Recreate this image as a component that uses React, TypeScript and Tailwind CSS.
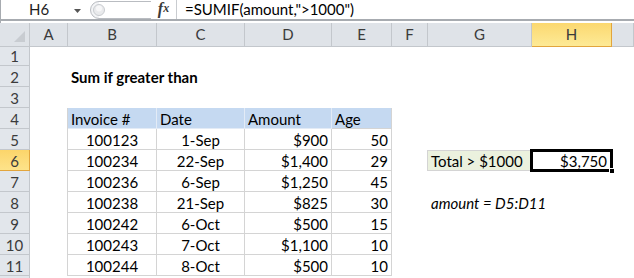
const colHeads = ['A', 'B', 'C', 'D', 'E', 'F', 'G', 'H', ''];

const invoices = [
    ['100123', '1-Sep', '$900', '50'],
    ['100234', '22-Sep', '$1,400', '29'],
    ['100236', '6-Sep', '$1,250', '45'],
    ['100238', '21-Sep', '$825', '30'],
    ['100242', '6-Oct', '$500', '15'],
    ['100243', '7-Oct', '$1,100', '10'],
    ['100244', '8-Oct', '$500', '10'],
];

const FormulaBar = () => (
    <div className="flex h-[21px] items-center border-b-2 border-l border-[#a7abb0] bg-white">
        <div className="relative flex h-full w-[86px] items-center">
            <span className="pl-[28px] text-[15px] text-[#1e1e1e]">H6</span>
            <svg className="absolute left-[73px] top-[9px]" width="8" height="5" viewBox="0 0 8 5">
                <path d="M0 0h7L3.5 4z" fill="#555" />
            </svg>
        </div>
        <svg width="64" height="20" viewBox="0 0 64 20" className="shrink-0">
            <path d="M12 1.5h52M12 18.5h52M12 1.5a8.5 8.5 0 0 0 0 17" stroke="#b9bcc1" fill="#f3f4f6" />
            <circle cx="12" cy="10" r="5.5" fill="#e9eaec" stroke="#c9ccd0" />
            <circle cx="12" cy="8.5" r="3" fill="#f7f7f8" />
        </svg>
        <div className="flex w-[25px] shrink-0 justify-center pb-[2px] font-['Liberation_Serif',serif] text-[16px] font-bold italic text-[#3a3a3a]">
            f<span className="text-[12px] leading-none pt-[5px]">x</span>
        </div>
        <div className="h-full w-px bg-[#c9ccd0]" />
        <span className="pl-[8px] text-[15px] text-black">=SUMIF(amount,"&gt;1000")</span>
    </div>
);

const HeaderCell = ({ label, active }: { label: string; active?: boolean }) => (
    <div className={active
        ? 'flex items-center justify-center border-r border-b border-[#e2a53d] bg-gradient-to-b from-[#fbd86f] to-[#fdea96] text-[15px] text-[#3b3b3b]'
        : 'flex items-center justify-center border-r border-b border-[#c3c7cc] bg-[#dfe3e8] text-[15px] text-[#3b3b3b]'}>
        {label}
    </div>
);

const RowHead = ({ n }: { n: number }) => (
    <div className={n === 6
        ? 'flex items-center justify-center border-r border-b border-[#e2a53d] bg-gradient-to-b from-[#fcd56a] to-[#fde38a] pt-[2px] text-[15px] text-[#3b3b3b]'
        : 'flex items-center justify-center border-r border-b border-[#c3c7cc] bg-[#e2e6eb] pt-[2px] text-[15px] text-[#3b3b3b]'}>
        {n <= 11 ? n : ''}
    </div>
);

const grid = 'grid grid-cols-[30px_38px_89px_88px_87px_60px_36px_104px_80px_22px]';

export default function App() {
    return (
        <div className="h-[278px] w-[634px] overflow-hidden bg-white font-['Lato',sans-serif] text-black">
            <FormulaBar />
            <div className="h-[2px] border-l border-[#a7abb0] bg-white" />
            <div className={grid + ' h-[22px]'}>
                <div className="relative border-r border-b border-[#c3c7cc] bg-[#dfe3e8]">
                    <svg className="absolute bottom-[4px] right-[4px]" width="11" height="11" viewBox="0 0 11 11">
                        <path d="M11 0v11H0z" fill="#c8ccd1" />
                    </svg>
                </div>
                {colHeads.map((c, i) => (
                    <HeaderCell key={i} label={c} active={c === 'H'} />
                ))}
            </div>
            <div className={grid + ' auto-rows-[21px]'}>
                {Array.from({ length: 12 }, (_, k) => {
                    const r = k + 1;
                    const inv = r >= 5 && r <= 11 ? invoices[r - 5] : null;
                    const cell = 'flex items-center px-[3px] pt-[2px] text-[15px] whitespace-nowrap';
                    const body = 'border-r border-b border-[#d4d4d4]';
                    const head = 'border-r border-b border-[#e3ebf6] bg-[#c5d9f1]';
                    return [
                        <RowHead key={'h' + r} n={r} />,
                        <div key={'a' + r} className={r >= 4 && r <= 11 ? 'border-r border-[#d4d4d4]' : ''} />,
                        r === 2 ? (
                            <div key={'b' + r} className={cell + ' font-bold'}>Sum if greater than</div>
                        ) : r === 4 ? (
                            <div key={'b' + r} className={cell + ' ' + head}>Invoice #</div>
                        ) : inv ? (
                            <div key={'b' + r} className={cell + ' justify-center ' + body}>{inv[0]}</div>
                        ) : <div key={'b' + r} />,
                        r === 4 ? (
                            <div key={'c' + r} className={cell + ' ' + head}>Date</div>
                        ) : inv ? (
                            <div key={'c' + r} className={cell + ' justify-center ' + body}>{inv[1]}</div>
                        ) : <div key={'c' + r} />,
                        r === 4 ? (
                            <div key={'d' + r} className={cell + ' ' + head}>Amount</div>
                        ) : inv ? (
                            <div key={'d' + r} className={cell + ' justify-end ' + body}>{inv[2]}</div>
                        ) : <div key={'d' + r} />,
                        r === 4 ? (
                            <div key={'e' + r} className={cell + ' border-r border-b border-[#d4d4d4] bg-[#c5d9f1]'}>Age</div>
                        ) : inv ? (
                            <div key={'e' + r} className={cell + ' justify-end ' + body}>{inv[3]}</div>
                        ) : <div key={'e' + r} />,
                        <div key={'f' + r} className={r === 6 ? 'border-r border-[#d4d4d4]' : ''} />,
                        r === 6 ? (
                            <div key={'g' + r} className={cell + ' border-t border-b border-[#d4d4d4] bg-[#ebf1de]'}>Total &gt; $1000</div>
                        ) : r === 8 ? (
                            <div key={'g' + r} className={cell + ' italic'}>amount = D5:D11</div>
                        ) : <div key={'g' + r} />,
                        r === 6 ? (
                            <div key={'hh' + r} className={cell + ' relative justify-end pr-[5px]'}>
                                $3,750
                                <div className="absolute -left-[2px] -top-[1px] -right-[1px] -bottom-[1px] border-[3px] border-black" />
                                <div className="absolute -bottom-[3px] -right-[3px] h-[6px] w-[6px] border border-white bg-black" />
                            </div>
                        ) : <div key={'hh' + r} />,
                        <div key={'i' + r} />,
                    ];
                })}
            </div>
        </div>
    );
}
